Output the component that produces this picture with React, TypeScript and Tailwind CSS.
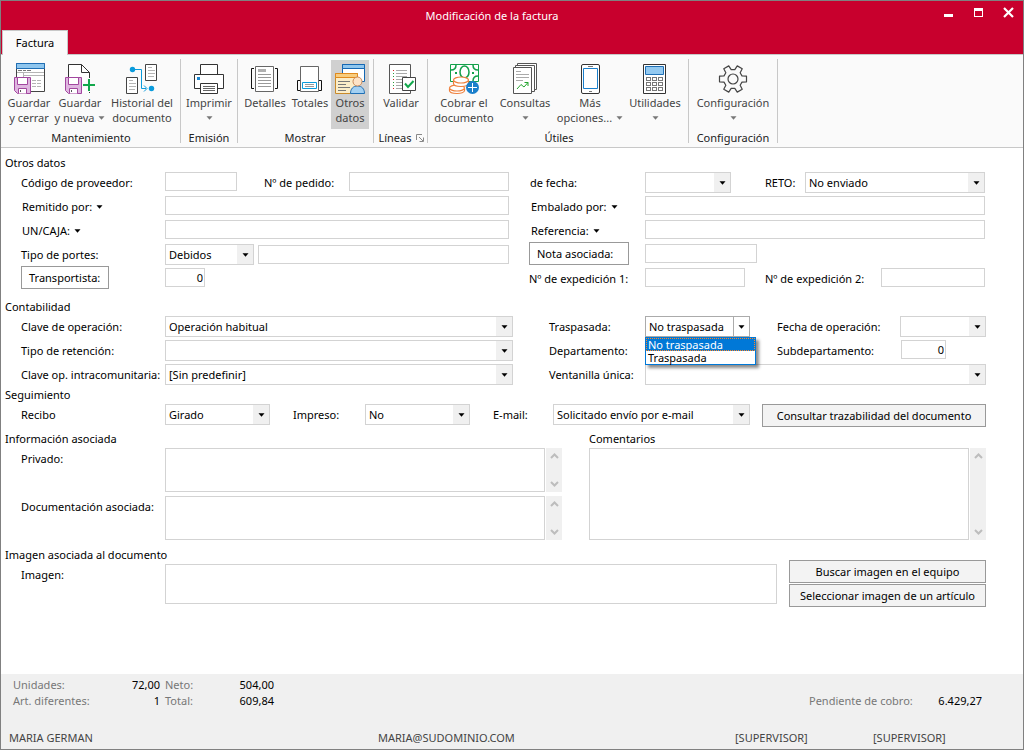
import React, { useState } from "react";
import type { ReactNode } from "react";
import { clsx } from "clsx";

/* ---------- Icons ---------- */

function Icon({ children }: { children: ReactNode }) {
  return (
    <svg width="32" height="32" viewBox="0 0 32 32" fill="none" aria-hidden="true" className="shrink-0">
      {children}
    </svg>
  );
}

function Floppy() {
  return (
    <g>
      <path d="M1.5 14.5H17.5V30.5H4.5L1.5 27.5Z" fill="#dfb6e0" stroke="#a2479f" />
      <path d="M4.5 14.5H14.5V21.5H4.5Z" fill="#fff" stroke="#a2479f" />
      <path d="M5.5 30.5V25.5H13.5V30.5" fill="#fff" stroke="#a2479f" />
      <path d="M7.5 27V29" stroke="#555" />
    </g>
  );
}

const SaveCloseIcon = () => (
  <Icon>
    <path d="M3.5 .5H31.5V28.5H3.5Z" fill="#fff" stroke="#444" />
    <path d="M3.5 .5H31.5V5.5H3.5Z" fill="#8fc6ee" stroke="#1f6fb5" />
    <path d="M5 7.5H9M10 7.5H13M14 7.5H18" stroke="#777" />
    <path d="M4 9.5H31M10.5 9.5V14M10 12.5H31" stroke="#b5b5b5" />
    <path d="M19 17.5H29M19 20.5H29M19 23.5H29" stroke="#b5b5b5" strokeDasharray="4 1" />
    <Floppy />
  </Icon>
);

const SaveNewIcon = () => (
  <Icon>
    <path d="M4.5 30V1.5H17.5L25.5 9.5V30" fill="#fff" stroke="#333" />
    <path d="M17.5 1.5V9.5H25.5" stroke="#333" />
    <Floppy />
    <path d="M25 15V29M18 22H32" stroke="#fafafa" strokeWidth="5" />
    <path d="M25 16V28M19 22H31" stroke="#12a84c" strokeWidth="2" />
  </Icon>
);

const HistoryIcon = () => (
  <Icon>
    <path d="M19.5 1.5H30.5V17.5H19.5Z" fill="#fff" stroke="#444" />
    <path d="M22 4.5H26M22 7.5H29M22 10.5H29M22 13.5H28" stroke="#b5b5b5" />
    <path d="M.5 14.5H11.5V30.5H.5Z" fill="#fff" stroke="#444" />
    <path d="M3 17.5H7M3 20.5H10M3 23.5H10M3 26.5H9" stroke="#b5b5b5" />
    <path d="M8 6.5H15.5V25.5H20M18 22.5L21 25.5L18 28.5" stroke="#0a9bdc" />
    <circle cx="6.5" cy="6.5" r="2.7" fill="#0a9bdc" />
    <circle cx="25.5" cy="25.5" r="2.7" fill="#0a9bdc" />
  </Icon>
);

const PrintIcon = () => (
  <Icon>
    <path d="M7.5 11V1.5H24.5V11" fill="#fff" stroke="#333" />
    <path d="M1.5 11.5H30.5V25.5H1.5Z" fill="#fff" stroke="#333" />
    <path d="M4 14H7V17H4Z" fill="#1a86d0" />
    <path d="M7.5 20.5H24.5V30.5H7.5Z" fill="#fff" stroke="#333" />
    <path d="M10 23.5H22M10 25.5H22M10 27.5H22" stroke="#666" />
  </Icon>
);

const DetailsIcon = () => (
  <Icon>
    <path d="M6.5 3.5H24.5V28.5H6.5Z" fill="#fff" stroke="#666" />
    <path d="M9 6H17V9H9Z" fill="#b0b0b0" />
    <path d="M9 11.5H22M9 14.5H22M9 17.5H22M9 20.5H22M9 23.5H22" stroke="#999" />
    <path d="M5 5.5H2.5V25.5H5M26 5.5H28.5V25.5H26" stroke="#111" />
  </Icon>
);

const TotalsIcon = () => (
  <Icon>
    <path d="M6.5 3.5H24.5V28.5H6.5Z" fill="#fff" stroke="#666" />
    <path d="M8.5 19.5H22.5V25.5H8.5Z" fill="#fff" stroke="#0a9bdc" />
    <path d="M11 21.5H20M11 23.5H20" stroke="#999" />
    <path d="M6 17.5H3.5V27.5H6M25 17.5H27.5V27.5H25" stroke="#111" />
  </Icon>
);

const OtherDataIcon = () => (
  <Icon>
    <path d="M8.5 1.5H30.5V18.5H8.5Z" fill="#fff" stroke="#1467b3" />
    <path d="M8.5 1.5H30.5V5.5H8.5Z" fill="#8fc6ee" stroke="#1467b3" />
    <path d="M1.5 10.5H23.5V30.5H1.5Z" fill="#fbedc8" stroke="#c98a2b" />
    <path d="M1.5 10.5H23.5V14.5H1.5Z" fill="#f8cd7e" stroke="#e08a1e" />
    <path d="M4 18.5H16M4 21.5H12M4 24.5H16M4 27.5H12" stroke="#777" />
    <path d="M16.5 30.5C16.5 26 19 23 23.5 23S30.5 26 30.5 30.5Z" fill="#a3d0f2" stroke="#1f6fb5" />
    <circle cx="23.5" cy="18.5" r="4.5" fill="#fde3c6" stroke="#c98a5a" />
  </Icon>
);

const ValidateIcon = () => (
  <Icon>
    <path d="M4.5 1.5H25.5V30.5H4.5Z" fill="#fff" stroke="#555" />
    <path d="M8 7.5H9M8 16.5H9M8 25.5H9" stroke="#d22" />
    <path d="M8 10.5H9M8 13.5H9M8 19.5H9M8 22.5H9" stroke="#2a9d3a" />
    <path d="M11 7.5H22M11 10.5H22M11 13.5H22M11 16.5H17M11 19.5H17M11 22.5H17M11 25.5H17" stroke="#aaa" />
    <path d="M17.5 14.5H30.5V27.5H17.5Z" fill="#fff" stroke="#444" />
    <path d="M20 20.5L23 24L28.5 18" stroke="#12a84c" strokeWidth="2" />
  </Icon>
);

const CashIcon = () => (
  <Icon>
    <path d="M2.5 1.5H30.5V18.5H2.5Z" fill="#fff" stroke="#12a04a" />
    <path d="M3 7C6 7 8 5 8 2M30 7C27 7 25 5 25 2M30 13C27 13 25 15 25 18" stroke="#12a04a" strokeWidth="1.5" />
    <ellipse cx="16.5" cy="9" rx="4.5" ry="6" stroke="#12a04a" strokeWidth="1.5" />
    <path d="M7 9H9V11H7ZM24 9H26V11H24Z" fill="#12a04a" />
    <path d="M5 15H20V20H16V30H1V24L5 22Z" fill="#fff" />
    <g fill="#fff" stroke="#ee7f3b" strokeWidth="1.2">
      <path d="M1.5 25.5V27.5C1.5 31.5 16.5 31.5 16.5 27.5V25.5" />
      <ellipse cx="9" cy="25" rx="7.5" ry="3" />
      <path d="M5.5 17.5V20.5C5.5 24.5 20.5 24.5 20.5 20.5V17.5" />
      <ellipse cx="13" cy="17" rx="7.5" ry="3" />
    </g>
    <circle cx="24.5" cy="24.5" r="6.5" fill="#1a7fcb" />
    <path d="M24.5 20V29M20 24.5H29" stroke="#fff" />
  </Icon>
);

const ReportsIcon = () => (
  <Icon>
    <path d="M8.5 .5H27.5V26.5H8.5Z" fill="#fff" stroke="#555" />
    <path d="M6.5 2.5H25.5V28.5H6.5Z" fill="#fff" stroke="#555" />
    <path d="M4.5 4.5H22.5V30.5H4.5Z" fill="#fff" stroke="#555" />
    <path d="M7 8.5H12M7 11.5H20M7 14.5H20M7 17.5H14" stroke="#aaa" />
    <path d="M8 26L12 21.5L15 24L19 19.5M15.5 19.5H19V23" stroke="#25a52f" />
  </Icon>
);

const PhoneIcon = () => (
  <Icon>
    <rect x="7.5" y="1.5" width="18" height="29" rx="1.5" fill="#fff" stroke="#333" />
    <path d="M9.5 5.5H23.5V25.5H9.5Z" fill="#fff" stroke="#1a7fcb" />
    <path d="M14 3.5H19M15 28.5H18" stroke="#777" />
  </Icon>
);

const CalculatorIcon = () => (
  <Icon>
    <path d="M4.5 1.5H26.5V30.5H4.5Z" fill="#fff" stroke="#333" />
    <path d="M6.5 3.5H24.5V11.5H6.5Z" fill="#93c9f0" stroke="#1f6fb5" />
    {[14.5, 19.5, 24.5].map((y) =>
      [7.5, 13.5, 19.5].map((x) => (
        <rect key={`${x}-${y}`} x={x} y={y} width="4" height="3" fill="#fff" stroke="#777" />
      ))
    )}
  </Icon>
);

const gearPoints = [0, 60, 120, 180, 240, 300]
  .flatMap((base) =>
    [
      [-19, 9.5],
      [-12, 13.8],
      [12, 13.8],
      [19, 9.5],
    ].map(([offset, radius]) => {
      const angle = ((base + offset) * Math.PI) / 180;
      return `${(16 + radius * Math.cos(angle)).toFixed(2)},${(16 + radius * Math.sin(angle)).toFixed(2)}`;
    })
  )
  .join(" ");

const GearIcon = () => (
  <Icon>
    <polygon points={gearPoints} stroke="#444" strokeWidth="1.2" strokeLinejoin="round" />
    <circle cx="16" cy="16" r="5" stroke="#444" strokeWidth="1.2" />
  </Icon>
);

function Caret({ className = "text-black" }: { className?: string }) {
  return (
    <svg width="7" height="4" viewBox="0 0 7 4" aria-hidden="true" className={clsx("shrink-0", className)}>
      <path d="M.5 .3H6.5L3.5 3.7Z" fill="currentColor" />
    </svg>
  );
}

/* ---------- Ribbon ---------- */

interface RibbonButtonProps {
  icon: ReactNode;
  lines: string[];
  caret?: boolean;
  active?: boolean;
  className: string;
}

function RibbonButton({ icon, lines, caret, active, className }: RibbonButtonProps) {
  return (
    <button
      type="button"
      aria-pressed={active}
      className={clsx(
        "flex h-[69px] shrink-0 flex-col items-center pt-[3px] leading-[15px] whitespace-nowrap text-[#444]",
        active && "bg-[#d0d0d0]",
        className
      )}
    >
      {icon}
      <span>{lines[0]}</span>
      <span className="flex h-[15px] items-center gap-1">
        {lines[1]}
        {caret && <Caret className="text-[#777]" />}
      </span>
    </button>
  );
}

function RibbonGroup({ title, className, launcher, children }: { title: string; className: string; launcher?: boolean; children: ReactNode }) {
  return (
    <section className={clsx("flex shrink-0 flex-col justify-between border-r border-[#c8c8c8] pt-px", className)}>
      <div className="flex justify-center">{children}</div>
      <div className="flex items-center justify-center gap-1 leading-[10px] text-[#222]">
        <h2>{title}</h2>
        {launcher && (
          <button type="button" aria-label="Opciones de líneas">
            <svg width="8" height="8" viewBox="0 0 8 8" fill="none" stroke="#888">
              <path d="M.5 6V.5H6M3 3L7 7M7.5 3.5V7.5H3.5" />
            </svg>
          </button>
        )}
      </div>
    </section>
  );
}

/* ---------- Form controls ---------- */

function Field({ label, className = "", value = "" }: { label: string; className?: string; value?: string }) {
  return (
    <input
      aria-label={label}
      defaultValue={value}
      className={clsx("h-[19px] min-w-0 border border-[#d3d3d3] bg-white px-px outline-none", className)}
    />
  );
}

function Select({ id, value = "", className }: { id: string; value?: string; className: string }) {
  return (
    <div className={clsx("relative h-[21px] min-w-0", className)}>
      <select
        id={id}
        className="block h-full w-full appearance-none border border-[#d3d3d3] bg-white pt-px pr-4 pl-[3px] outline-none"
      >
        <option>{value}</option>
      </select>
      <span className="pointer-events-none absolute inset-y-px right-px flex w-4 items-center justify-center bg-[#f0f0f0]">
        <Caret />
      </span>
    </div>
  );
}

function TransferSelect() {
  const options = ["No traspasada", "Traspasada"];
  const [value, setValue] = useState(options[0]);
  return (
    <div className="relative h-[21px] w-[105px] shrink-0">
      <select
        id="traspasada"
        value={value}
        onChange={(e) => setValue(e.target.value)}
        className="block h-full w-full appearance-none border border-[#ababab] bg-white pt-px pr-4 pl-[3px] outline-none"
      >
        {options.map((o) => (
          <option key={o}>{o}</option>
        ))}
      </select>
      <span className="pointer-events-none absolute inset-y-px right-px flex w-4 items-center justify-center border-l border-[#ababab] bg-white">
        <Caret />
      </span>
      <ul
        role="listbox"
        aria-label="Traspasada"
        className="absolute top-full left-0 z-10 w-[111px] border border-[#0078d7] bg-white leading-[13px] shadow-[3px_3px_3px_rgba(0,0,0,0.45)]"
      >
        {options.map((o) => (
          <li
            key={o}
            role="option"
            aria-selected={o === value}
            onClick={() => setValue(o)}
            className={clsx("h-[13px] pl-[2px] whitespace-nowrap", o === value && "bg-[#0078d7] text-white outline-1 -outline-offset-1 outline-dotted outline-[#ff8728]")}
          >
            {o}
          </li>
        ))}
      </ul>
    </div>
  );
}

function Memo({ id }: { id: string }) {
  return (
    <div className="flex min-w-0 flex-1 gap-px">
      <textarea id={id} className="block min-w-0 flex-1 resize-none overflow-hidden border border-[#d3d3d3] bg-white outline-none" />
      <div aria-hidden="true" className="flex w-4 flex-col items-center justify-between bg-[#f0f0f0] py-[5px]">
        <svg width="9" height="6" viewBox="0 0 9 6" fill="none" stroke="#bdbdbd" strokeWidth="2">
          <path d="M1 5L4.5 1.5L8 5" />
        </svg>
        <svg width="9" height="6" viewBox="0 0 9 6" fill="none" stroke="#bdbdbd" strokeWidth="2">
          <path d="M1 1L4.5 4.5L8 1" />
        </svg>
      </div>
    </div>
  );
}

function Label({ htmlFor, className, children }: { htmlFor?: string; className: string; children: ReactNode }) {
  return (
    <label htmlFor={htmlFor} className={clsx("shrink-0 leading-[22px] whitespace-nowrap", className)}>
      {children}
    </label>
  );
}

function MenuLabel({ className, children }: { className: string; children: ReactNode }) {
  return (
    <div className={clsx("shrink-0", className)}>
      <button type="button" className="flex items-center gap-1 leading-[22px] whitespace-nowrap">
        {children}
        <Caret />
      </button>
    </div>
  );
}

function LinkButton({ className, children }: { className: string; children: ReactNode }) {
  return (
    <button type="button" className={clsx("-mt-0.5 h-[23px] shrink-0 border border-[#999] bg-white pt-px pr-2 pl-[7px] text-left", className)}>
      {children}
    </button>
  );
}

function ActionButton({ className = "", children }: { className?: string; children: ReactNode }) {
  return (
    <button type="button" className={clsx("h-[23px] shrink-0 border border-[#999] bg-[#f3f3f3] pt-px text-center whitespace-nowrap", className)}>
      {children}
    </button>
  );
}

const Row = ({ children }: { children: ReactNode }) => <div className="flex h-6 items-start">{children}</div>;
const Heading = ({ children }: { children: ReactNode }) => <h2 className="h-4 leading-[14px]">{children}</h2>;

/* ---------- Page ---------- */

export default function App() {
  return (
    <div className="flex min-h-screen flex-col border border-[#808080] bg-white font-['Noto_Sans','Open_Sans',sans-serif] text-[11px] text-black">
      <header className="bg-[#c8002d]">
        <div className="flex h-[29px] text-white">
          <h1 className="flex-1 pl-10 text-center leading-[30px]">Modificación de la factura</h1>
          <div className="flex w-20 items-start gap-5 pt-[6px]">
            <button type="button" aria-label="Minimizar">
              <svg width="10" height="11" viewBox="0 0 10 11"><path d="M1 7H10V10H1Z" fill="#fff" /></svg>
            </button>
            <button type="button" aria-label="Maximizar">
              <svg width="10" height="11" viewBox="0 0 10 11"><path d="M1 1H10V10H1ZM2 4V9H9V4Z" fill="#fff" fillRule="evenodd" /></svg>
            </button>
            <button type="button" aria-label="Cerrar">
              <svg width="11" height="11" viewBox="0 0 11 11"><path d="M1 1L10 10M10 1L1 10" stroke="#fff" strokeWidth="2.2" /></svg>
            </button>
          </div>
        </div>
        <nav className="flex h-6 pl-px">
          <a href="#factura" className="relative z-10 -mb-px flex w-[66px] items-center justify-center border-x border-t border-[#c8c8c8] bg-[#fafafa]">
            Factura
          </a>
        </nav>
      </header>

      <div className="flex h-[94px] border-y border-[#c8c8c8] bg-[#fafafa] py-1">
        <RibbonGroup title="Mantenimiento" className="w-[180px] pl-px">
          <RibbonButton icon={<SaveCloseIcon />} lines={["Guardar", "y cerrar"]} className="w-[50px]" />
          <RibbonButton icon={<SaveNewIcon />} lines={["Guardar", "y nueva"]} caret className="w-[52px]" />
          <RibbonButton icon={<HistoryIcon />} lines={["Historial del", "documento"]} className="w-[72px]" />
        </RibbonGroup>
        <RibbonGroup title="Emisión" className="w-[57px]">
          <RibbonButton icon={<PrintIcon />} lines={["Imprimir", ""]} caret className="w-[50px]" />
        </RibbonGroup>
        <RibbonGroup title="Mostrar" className="w-[136px] pr-px">
          <RibbonButton icon={<DetailsIcon />} lines={["Detalles", ""]} className="w-[48px]" />
          <RibbonButton icon={<TotalsIcon />} lines={["Totales", ""]} className="w-[42px]" />
          <RibbonButton icon={<OtherDataIcon />} lines={["Otros", "datos"]} active className="w-[38px]" />
        </RibbonGroup>
        <RibbonGroup title="Líneas" launcher className="w-[54px] pl-px">
          <RibbonButton icon={<ValidateIcon />} lines={["Validar", ""]} className="w-[52px]" />
        </RibbonGroup>
        <RibbonGroup title="Útiles" className="w-[261px] pl-[2px]">
          <RibbonButton icon={<CashIcon />} lines={["Cobrar el", "documento"]} className="w-[62px]" />
          <RibbonButton icon={<ReportsIcon />} lines={["Consultas", ""]} caret className="w-[60px]" />
          <RibbonButton icon={<PhoneIcon />} lines={["Más", "opciones..."]} caret className="w-[70px]" />
          <RibbonButton icon={<CalculatorIcon />} lines={["Utilidades", ""]} caret className="w-[60px]" />
        </RibbonGroup>
        <RibbonGroup title="Configuración" className="w-[89px]">
          <RibbonButton icon={<GearIcon />} lines={["Configuración", ""]} caret className="w-[80px]" />
        </RibbonGroup>
      </div>

      <main className="flex-1 pt-2 pr-[37px] pl-1">
        <section>
          <Heading>Otros datos</Heading>
          <div className="grid grid-cols-[minmax(0,504fr)_minmax(0,456fr)] gap-5 pr-px">
            <div>
              <Row>
                <Label className="w-40 pl-4">Código de proveedor:</Label>
                <Field label="Código de proveedor" className="w-[72px]" />
                <Label className="ml-[27px] w-[85px]">Nº de pedido:</Label>
                <Field label="Nº de pedido" className="flex-1" />
              </Row>
              <Row>
                <MenuLabel className="w-40 pl-[17px]">Remitido por:</MenuLabel>
                <Field label="Remitido por" className="flex-1" />
              </Row>
              <Row>
                <MenuLabel className="w-40 pl-[17px]">UN/CAJA:</MenuLabel>
                <Field label="UN/CAJA" className="flex-1" />
              </Row>
              <Row>
                <Label htmlFor="portes" className="w-40 pl-4">Tipo de portes:</Label>
                <Select id="portes" value="Debidos" className="w-[89px]" />
                <Field label="Detalle de portes" className="mt-px ml-1 flex-1" />
              </Row>
              <Row>
                <div className="flex w-40 shrink-0 pl-4">
                  <LinkButton className="w-[88px]">Transportista:</LinkButton>
                </div>
                <Field label="Transportista" value="0" className="w-10 text-right" />
              </Row>
            </div>
            <div>
              <Row>
                <Label htmlFor="fecha" className="w-[116px] pl-px">de fecha:</Label>
                <Select id="fecha" className="w-[86px]" />
                <Label htmlFor="reto" className="ml-[34px] w-10">RETO:</Label>
                <Select id="reto" value="No enviado" className="flex-1" />
              </Row>
              <Row>
                <MenuLabel className="w-[116px] pl-[2px]">Embalado por:</MenuLabel>
                <Field label="Embalado por" className="flex-1" />
              </Row>
              <Row>
                <MenuLabel className="w-[116px] pl-[2px]">Referencia:</MenuLabel>
                <Field label="Referencia" className="flex-1" />
              </Row>
              <Row>
                <div className="flex w-[116px] shrink-0">
                  <LinkButton className="w-[100px]">Nota asociada:</LinkButton>
                </div>
                <Field label="Nota asociada" className="w-[112px]" />
              </Row>
              <Row>
                <Label className="w-[116px]">Nº de expedición 1:</Label>
                <Field label="Nº de expedición 1" className="w-[100px]" />
                <Label className="ml-5 w-[116px]">Nº de expedición 2:</Label>
                <Field label="Nº de expedición 2" className="flex-1" />
              </Row>
            </div>
          </div>
        </section>

        <section className="mt-2">
          <Heading>Contabilidad</Heading>
          <div className="grid grid-cols-[minmax(0,508fr)_minmax(0,437fr)] gap-9">
            <div>
              <Row>
                <Label htmlFor="clave" className="w-40 pl-4">Clave de operación:</Label>
                <Select id="clave" value="Operación habitual" className="flex-1" />
              </Row>
              <Row>
                <Label htmlFor="retencion" className="w-40 pl-4">Tipo de retención:</Label>
                <Select id="retencion" className="flex-1" />
              </Row>
              <Row>
                <Label htmlFor="intracom" className="w-40 pl-4">Clave op. intracomunitaria:</Label>
                <Select id="intracom" value="[Sin predefinir]" className="flex-1" />
              </Row>
            </div>
            <div>
              <Row>
                <Label htmlFor="traspasada" className="w-24">Traspasada:</Label>
                <TransferSelect />
                <Label htmlFor="fechaop" className="ml-[27px] w-[123px]">Fecha de operación:</Label>
                <Select id="fechaop" className="flex-1" />
              </Row>
              <Row>
                <Label className="w-24">Departamento:</Label>
                <Field label="Departamento" value="0" className="w-10 text-right" />
                <Label className="ml-[92px] w-[124px]">Subdepartamento:</Label>
                <Field label="Subdepartamento" value="0" className="w-[45px] text-right" />
              </Row>
              <Row>
                <Label htmlFor="ventanilla" className="w-24">Ventanilla única:</Label>
                <Select id="ventanilla" className="flex-1" />
              </Row>
            </div>
          </div>
        </section>

        <section>
          <Heading>Seguimiento</Heading>
          <Row>
            <Label htmlFor="recibo" className="w-40 pl-4">Recibo</Label>
            <Select id="recibo" value="Girado" className="w-[105px]" />
            <Label htmlFor="impreso" className="ml-[23px] w-[72px]">Impreso:</Label>
            <Select id="impreso" value="No" className="w-[105px]" />
            <Label htmlFor="email" className="ml-[23px] w-[60px]">E-mail:</Label>
            <Select id="email" value="Solicitado envío por e-mail" className="flex-1" />
            <ActionButton className="ml-3 w-[224px]">Consultar trazabilidad del documento</ActionButton>
          </Row>
        </section>

        <div className="mt-1 grid grid-cols-[minmax(0,557fr)_minmax(0,397fr)] gap-[27px]">
          <section>
            <Heading>Información asociada</Heading>
            <div className="flex flex-col gap-1">
              <div className="flex h-11">
                <Label htmlFor="privado" className="w-40 pl-4">Privado:</Label>
                <Memo id="privado" />
              </div>
              <div className="flex h-11">
                <Label htmlFor="documentacion" className="w-40 pl-4">Documentación asociada:</Label>
                <Memo id="documentacion" />
              </div>
            </div>
          </section>
          <section className="flex flex-col">
            <label htmlFor="comentarios" className="h-4 leading-[14px]">Comentarios</label>
            <Memo id="comentarios" />
          </section>
        </div>

        <section className="mt-2">
          <Heading>Imagen asociada al documento</Heading>
          <div className="flex items-start">
            <span className="w-40 shrink-0 pl-4 leading-[22px]">Imagen:</span>
            <div role="img" aria-label="Imagen" className="h-10 flex-1 border border-[#d3d3d3]" />
            <div className="-mt-1 ml-3 flex w-[197px] flex-col gap-px">
              <ActionButton>Buscar imagen en el equipo</ActionButton>
              <ActionButton>Seleccionar imagen de un artículo</ActionButton>
            </div>
          </div>
        </section>
      </main>

      <footer className="bg-[#f0f0f0] px-2 pt-[3px] whitespace-nowrap">
        <div className="flex items-end justify-between pr-[33px] pl-1 leading-4">
          <dl className="grid grid-cols-[92px_55px_54px_60px] text-[#777]">
            <dt>Unidades:</dt>
            <dd className="text-right text-black">72,00</dd>
            <dt className="pl-[5px]">Neto:</dt>
            <dd className="text-right text-black">504,00</dd>
            <dt>Art. diferentes:</dt>
            <dd className="text-right text-black">1</dd>
            <dt className="pl-[5px]">Total:</dt>
            <dd className="text-right text-black">609,84</dd>
          </dl>
          <dl className="grid grid-cols-[110px_63px] text-[#777]">
            <dt>Pendiente de cobro:</dt>
            <dd className="text-right text-black">6.429,27</dd>
          </dl>
        </div>
        <div className="mt-[21px] grid grid-cols-[369fr_357fr_138fr_142fr] pb-[3px] leading-4 text-[#444]">
          <span>MARIA GERMAN</span>
          <span>MARIA@SUDOMINIO.COM</span>
          <span>[SUPERVISOR]</span>
          <span>[SUPERVISOR]</span>
        </div>
      </footer>
    </div>
  );
}
